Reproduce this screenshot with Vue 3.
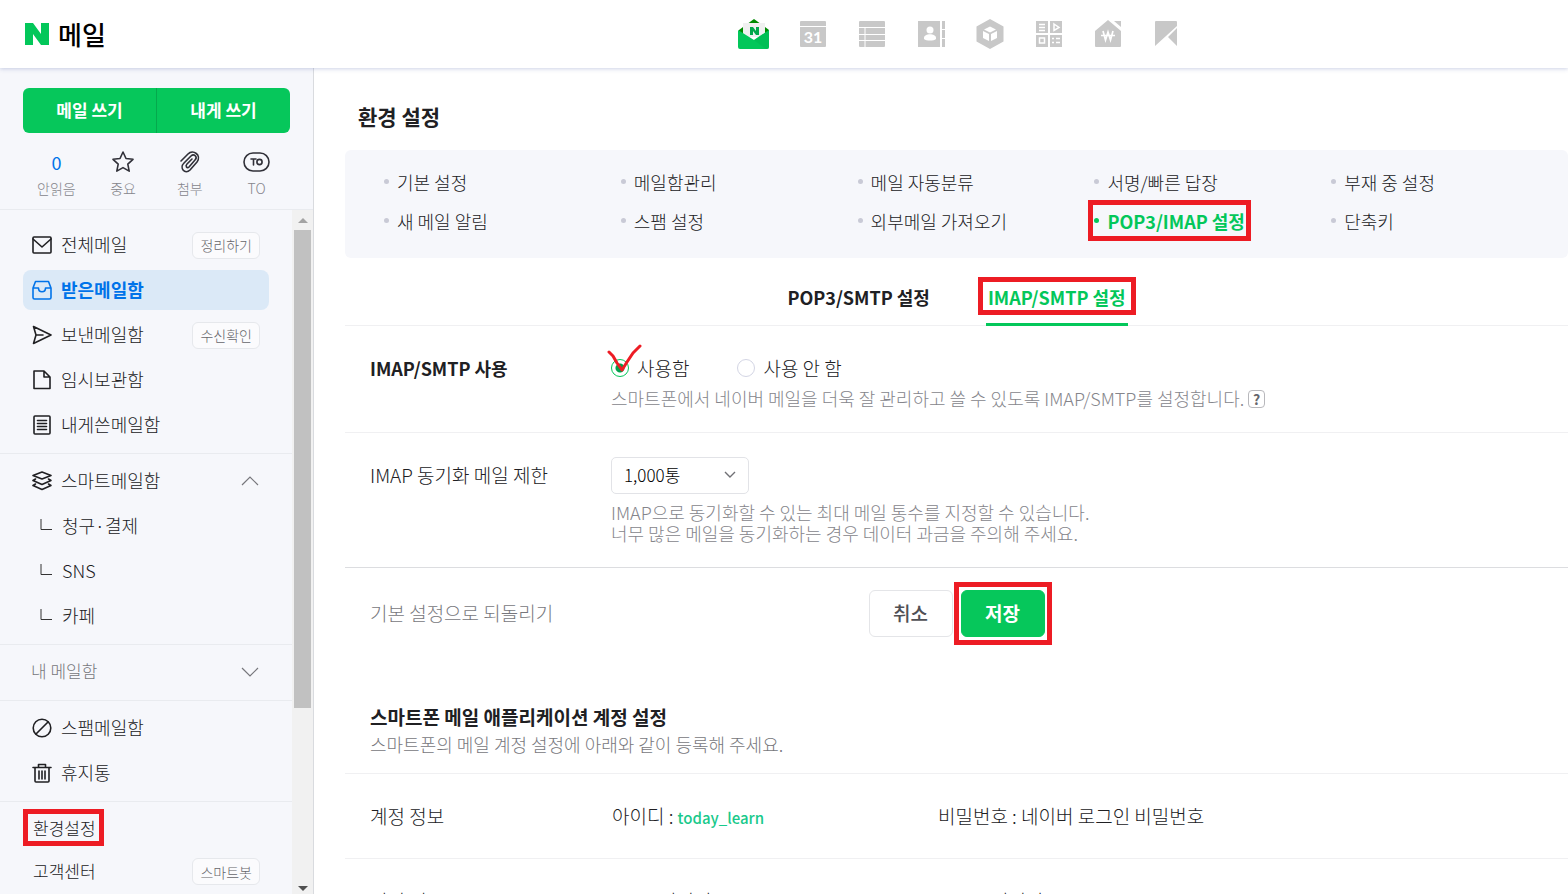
<template>
  <div class="app">
    <header class="top">
      <a href="#" class="logo">
        <svg width="24" height="22" viewBox="0 0 24 22"><path d="M0 0h8l8 11V0h8v22h-8L8 11v11H0z" fill="#03c75a" /></svg>
        <span>메일</span>
      </a>
      <nav class="services">
        <a v-for="s in services" :key="s.name" href="#" :aria-label="s.name">
          <svg width="32" height="32" viewBox="0 0 32 32" v-html="s.icon"></svg>
        </a>
      </nav>
    </header>

    <div class="body">
      <aside class="side">
        <div class="side-top">
          <div class="write">
            <button type="button">메일 쓰기</button>
            <button type="button">내게 쓰기</button>
          </div>
          <div class="quick">
            <a v-for="q in quick" :key="q.label" href="#">
              <span v-if="q.count" class="count">{{ q.count }}</span>
              <svg v-else width="28" height="24" viewBox="0 0 28 24" class="line" v-html="q.icon"></svg>
              <span>{{ q.label }}</span>
            </a>
          </div>
        </div>

        <div class="side-scroll">
          <div class="menus">
            <ul class="group boxes">
              <li v-for="b in boxes" :key="b.label" :class="{ on: b.on }">
                <a href="#">
                  <svg width="20" height="20" viewBox="0 0 20 20" class="line" v-html="b.icon"></svg>
                  {{ b.label }}
                </a>
                <button v-if="b.badge" type="button" class="badge">{{ b.badge }}</button>
              </li>
            </ul>
            <ul class="group smart">
              <li>
                <a href="#">
                  <svg width="20" height="20" viewBox="0 0 20 20" class="line" v-html="stackIcon"></svg>
                  스마트메일함
                </a>
                <button type="button" class="fold" aria-label="접기">
                  <svg width="18" height="10" viewBox="0 0 18 10"><path d="M1 9l8-8 8 8" /></svg>
                </button>
              </li>
              <li v-for="s in smart" :key="s" class="sub">
                <a href="#">
                  <svg width="12" height="12" viewBox="0 0 12 12"><path d="M1 0v10.500h11" fill="none" stroke="#333" /></svg>
                  {{ s }}
                </a>
              </li>
            </ul>
            <ul class="group mine">
              <li>
                <a href="#">내 메일함</a>
                <button type="button" class="fold" aria-label="펼치기">
                  <svg width="18" height="10" viewBox="0 0 18 10"><path d="M1 1l8 8 8-8" /></svg>
                </button>
              </li>
            </ul>
            <ul class="group trash">
              <li v-for="b in trash" :key="b.label">
                <a href="#">
                  <svg width="20" height="20" viewBox="0 0 20 20" class="line" v-html="b.icon"></svg>
                  {{ b.label }}
                </a>
              </li>
            </ul>
            <ul class="group etc">
              <li><a href="#" class="mark">환경설정</a></li>
              <li>
                <a href="#">고객센터</a>
                <button type="button" class="badge">스마트봇</button>
              </li>
            </ul>
          </div>
          <div class="bar">
            <svg width="10" height="5" viewBox="0 0 10 5"><path d="M0 5l5-5 5 5z" fill="#a3a3a3" /></svg>
            <div class="thumb"></div>
            <svg class="down" width="10" height="5" viewBox="0 0 10 5"><path d="M0 0l5 5 5-5z" fill="#505050" /></svg>
          </div>
        </div>
      </aside>

      <main class="content">
        <h1>환경 설정</h1>
        <ul class="settings">
          <li v-for="m in settings" :key="m" :class="{ on: m === 'POP3/IMAP 설정' }">
            <a href="#">{{ m }}</a>
          </li>
        </ul>

        <div class="tabs">
          <a href="#">POP3/SMTP 설정</a>
          <a href="#" class="on"><span class="mark">IMAP/SMTP 설정</span></a>
        </div>

        <form @submit.prevent>
          <div class="row">
            <strong class="label">IMAP/SMTP 사용</strong>
            <div class="value">
              <div class="radios">
                <label class="use">
                  <input v-model="use" type="radio" name="use" value="y" />사용함
                  <svg class="check" width="36" height="32" viewBox="0 0 36 32">
                    <path d="M2 8l4 4 4 7 5 7 5-8 6-9 7-7" />
                  </svg>
                </label>
                <label><input v-model="use" type="radio" name="use" value="n" />사용 안 함</label>
              </div>
              <p>
                스마트폰에서 네이버 메일을 더욱 잘 관리하고 쓸 수 있도록 IMAP/SMTP를 설정합니다.
                <button type="button" class="help">?</button>
              </p>
            </div>
          </div>
          <div class="row limit">
            <label class="label" for="limit">IMAP 동기화 메일 제한</label>
            <div class="value">
              <div class="select">
                <select id="limit" v-model="limit">
                  <option>1,000통</option>
                </select>
                <svg width="12" height="8" viewBox="0 0 12 8"><path d="M1 1l5 5 5-5" /></svg>
              </div>
              <p>IMAP으로 동기화할 수 있는 최대 메일 통수를 지정할 수 있습니다.<br />너무 많은 메일을 동기화하는 경우 데이터 과금을 주의해 주세요.</p>
            </div>
          </div>
          <div class="actions">
            <a href="#">기본 설정으로 되돌리기</a>
            <div class="buttons">
              <button type="button">취소</button>
              <button type="submit" class="save mark">저장</button>
            </div>
          </div>
        </form>

        <section>
          <div class="intro">
            <h2>스마트폰 메일 애플리케이션 계정 설정</h2>
            <p>스마트폰의 메일 계정 설정에 아래와 같이 등록해 주세요.</p>
          </div>
          <dl>
            <dt>계정 정보</dt>
            <dd>아이디 : <span class="user">today_learn</span></dd>
            <dd>비밀번호 : 네이버 로그인 비밀번호</dd>
          </dl>
          <dl>
            <dt>서버 명</dt>
            <dd>IMAP 서버명 : imap.naver.com</dd>
            <dd>SMTP 서버명 : smtp.naver.com</dd>
          </dl>
        </section>
      </main>
    </div>
  </div>
</template>

<script setup>
import { ref } from 'vue';

const use = ref('y');
const limit = ref('1,000통');

const services = [
  {
    name: '메일',
    icon: '<path d="M1 12L16 1l15 11v6H1z" fill="#008a00"/><path d="M5 5h22v14H5z" fill="#f0f0f0"/><path d="M0 12l16 10 15-10v17a2 2 0 0 1-2 2H2a2 2 0 0 1-2-2z" fill="#03c75a"/><path d="M16 22l12 9h1a2 2 0 0 0 2-2V12z" fill="#00b850" opacity=".5"/><path d="M12 9h3l3 4V9h3v8h-3l-3-4v4h-3z" fill="#00a84a"/>',
  },
  {
    name: '캘린더',
    icon: '<path d="M3 4a1 1 0 0 1 1-1h24a1 1 0 0 1 1 1v4H3zM3 9h26v19a1 1 0 0 1-1 1H4a1 1 0 0 1-1-1z" fill="#c8c8c8"/><text x="16" y="25" text-anchor="middle" font-size="16" font-weight="700" font-family="Lato, sans-serif" fill="#fff">31</text>',
  },
  {
    name: '메모',
    icon: '<rect x="3" y="3" width="26" height="26" rx="1" fill="#c8c8c8"/><path d="M3 9.500h26M3 16.500h26M3 22.500h26M9 10v19" stroke="#fff"/>',
  },
  {
    name: '주소록',
    icon: '<path d="M3 3h22v26H3zM27 3h3v8h-3zM27 12h3v8h-3zM27 21h3v8h-3z" fill="#c8c8c8"/><circle cx="15" cy="12" r="3.500" fill="#fff"/><path d="M9 20c0-5 12-5 12 0v1c-2 2-10 2-12 0z" fill="#fff"/>',
  },
  {
    name: 'MYBOX',
    icon: '<path d="M16 1l13.500 7.500v15L16 31 2.500 23.500v-15z" fill="#c8c8c8"/><path d="M16 8.500l6 3-6 3-6-3zM9 13l6 3v7l-6-3zM23 13l-6 3v7l6-3z" fill="#fff"/>',
  },
  {
    name: '오피스',
    icon: '<path d="M3 3h12v12H3zM17 3h12v12H17zM3 17h12v12H3zM17 17h12v12H17z" fill="#c8c8c8"/><path d="M6 6.500h6M6 9.500h6M6 12.500h6M19 20.500h2M23 20.500h4M19 24.500h2M23 24.500h4M21 6l5 3.500-5 3z M6.500 20h5v5h-5z" stroke="#fff" fill="none" stroke-width="1.500"/>',
  },
  {
    name: '가계부',
    icon: '<path d="M3 13L16 2l13 11v15a1 1 0 0 1-1 1H4a1 1 0 0 1-1-1zM22 3h7v6z" fill="#c8c8c8"/><path d="M11 13l2.500 9 2.500-8 2.500 8 2.500-9M9 17.500h14" fill="none" stroke="#fff" stroke-width="1.700"/>',
  },
  {
    name: '북마크',
    icon: '<path d="M4 4a1 1 0 0 1 1-1h20a1 1 0 0 1 1 1v4L4 28zM26 10v18l-9-9z" fill="#c8c8c8"/>',
  },
];

const quick = [
  { label: '안읽음', count: '0' },
  { label: '중요', icon: '<path d="M14 2l3 6.500 7 .8-5.200 4.800 1.400 7-6.200-3.500-6.200 3.500 1.400-7L4 9.300l7-.8z"/>' },
  { label: '첨부', icon: '<path d="M5 11l7-7c5-5 14 1 9 8l-7 8c-5 5-11-2-6-7l7-7c3-3 7 1 4 4l-6 7c-2 2-4-1-2-3l5-5"/>' },
  { label: 'TO', icon: '<rect x="1" y="3" width="25" height="18" rx="9"/><path d="M8 9h5M10.500 9v6"/><circle cx="16.500" cy="12" r="2.600"/>' },
];

const boxes = [
  { label: '전체메일', badge: '정리하기', icon: '<rect x="1" y="2" width="18" height="16" rx="1"/><path d="M1 4l9 8 9-8"/>' },
  { label: '받은메일함', on: true, icon: '<path d="M3.500 1.500h13L19 8v9.500a1.500 1.500 0 0 1-1.500 1.500h-15A1.500 1.500 0 0 1 1 17.500V8zM1 8h5.500c0 5 7 5 7 0H19"/>' },
  { label: '보낸메일함', badge: '수신확인', icon: '<path d="M1.500 1.500L19 10 1.500 18.500 4 10zM4 10h7"/>' },
  { label: '임시보관함', icon: '<path d="M2 1h10l6 6v11.500H2zM12 1v6h6"/>' },
  { label: '내게쓴메일함', icon: '<rect x="2" y="1" width="16" height="18" rx="1"/><path d="M5.500 5.500h9M5.500 8.500h9M5.500 11.500h9M5.500 14.500h9"/>' },
];
const stackIcon = '<path d="M10 1l9 3.500-9 3.500-9-3.500zM3.500 8L1 9.500l9 4 9-4L16.500 8M3.500 13L1 14.500l9 4 9-4-2.500-1.500"/>';
const smart = ['청구·결제', 'SNS', '카페'];
const trash = [
  { label: '스팸메일함', icon: '<circle cx="10" cy="10" r="8.800"/><path d="M4 16L16 4"/>' },
  { label: '휴지통', icon: '<path d="M1 4.500h18M6.500 4V1.500h7V4M3 5v13a1 1 0 0 0 1 1h12a1 1 0 0 0 1-1V5M7 8v8M10 8v8M13 8v8"/>' },
];

const settings = [
  '기본 설정', '메일함관리', '메일 자동분류', '서명/빠른 답장', '부재 중 설정',
  '새 메일 알림', '스팸 설정', '외부메일 가져오기', 'POP3/IMAP 설정', '단축키',
];
</script>

<style>
body {
  margin: 0;
}
</style>

<style scoped>
.app {
  height: 100vh;
  display: flex;
  flex-direction: column;
  overflow: hidden;
  background: #fff;
  color: #202023;
  font-family: "Noto Sans CJK KR", sans-serif;
  font-size: 18px;
  font-weight: 300;
  line-height: 24px;
}
.app * {
  box-sizing: border-box;
}
a {
  color: inherit;
  text-decoration: none;
}
ul, dl, dd, p, h1, h2 {
  margin: 0;
  padding: 0;
  list-style: none;
}
button, select, input {
  font: inherit;
  color: inherit;
  margin: 0;
  padding: 0;
  cursor: pointer;
}
svg {
  flex: none;
}
.line {
  fill: none;
  stroke: currentColor;
  stroke-width: 1.6;
  stroke-linejoin: round;
  stroke-linecap: round;
}

/* red marker frames */
.mark {
  position: relative;
}
.mark::after {
  content: "";
  position: absolute;
  inset: -7px -10px -5px;
  border: 5px solid #ed1c24;
  pointer-events: none;
}

.top {
  flex: none;
  position: relative;
  z-index: 1;
  height: 68px;
  display: flex;
  align-items: center;
  background: #fff;
  box-shadow: 0 1px 4px rgba(60, 80, 160, 0.25);
}
.logo {
  flex: 1;
  display: flex;
  align-items: center;
  gap: 9px;
  padding-left: 25px;
  color: #000;
  font-size: 26px;
  font-weight: 500;
}
.services {
  flex: none;
  display: flex;
  gap: 27px;
  padding-right: 385px;
}
.services svg {
  display: block;
}

.body {
  flex: 1;
  min-height: 0;
  display: flex;
}
.side {
  flex: none;
  width: 314px;
  display: flex;
  flex-direction: column;
  background: #f6f7fb;
  border-right: 1px solid #d9dbdf;
}
.side-top {
  flex: none;
  height: 142px;
  padding: 20px 23px 0;
  border-bottom: 1px solid #e9ebef;
}
.write {
  display: flex;
  height: 45px;
  border-radius: 6px;
  overflow: hidden;
}
.write button {
  flex: 1;
  padding-bottom: 2px;
  border: 0;
  background: #06c75b;
  color: #fff;
  font-size: 17px;
  font-weight: 700;
}
.write button + button {
  border-left: 1px solid #05a94d;
}
.quick {
  display: flex;
  padding-top: 17px;
}
.quick a {
  flex: 1;
  display: flex;
  flex-direction: column;
  align-items: center;
  gap: 2px;
  color: #303038;
}
.quick span {
  font-size: 14px;
  color: #85858b;
}
.quick .count {
  font-size: 18px;
  font-weight: 400;
  color: #0073e9;
}

.side-scroll {
  flex: 1;
  min-height: 0;
  display: flex;
}
.menus {
  flex: 1;
  overflow: hidden;
}
.group {
  padding: 7px 23px 8px;
  border-bottom: 1px solid #e9ebef;
}
.group li {
  display: flex;
  align-items: center;
  height: 40px;
  margin-bottom: 5px;
  padding: 0 9px;
  border-radius: 8px;
}
.group li:last-child {
  margin-bottom: 0;
}
.group a {
  display: flex;
  align-items: center;
  gap: 9px;
  padding-bottom: 2px;
}
.group a svg {
  margin-top: 2px;
}
.boxes {
  padding-top: 15px;
}
.boxes li.on {
  background: #dbe9f7;
  color: #0073e9;
  font-weight: 700;
}
.group .sub a {
  gap: 10px;
  padding-left: 8px;
}
.group .sub svg {
  margin-top: 0;
}
.mine {
  color: #77777c;
  font-size: 17px;
}
.mine li {
  padding-left: 8px;
}
.etc {
  padding: 5px 23px;
  border: 0;
  font-size: 17px;
}
.etc li {
  margin: 0;
  height: 43px;
  padding-left: 10px;
}
.etc .mark::after {
  inset: -7px -8px -4px -10px;
}
.badge {
  margin-left: auto;
  height: 27px;
  padding: 0 7px;
  border: 1px solid #e6e8ec;
  border-radius: 6px;
  background: #fbfbfd;
  color: #66666b;
  font-size: 14px;
  line-height: 20px;
}
.fold {
  margin-left: auto;
  width: 20px;
  border: 0;
  background: none;
  display: flex;
  justify-content: center;
}
.fold path {
  fill: none;
  stroke: #77777c;
  stroke-width: 1.2;
}
.bar {
  flex: none;
  width: 21px;
  padding: 8px 2px 3px;
  display: flex;
  flex-direction: column;
  align-items: center;
  gap: 7px;
  background: #f1f1f1;
}
.thumb {
  width: 17px;
  height: 71%;
  background: #c1c1c1;
}
.down {
  margin-top: auto;
}

.content {
  flex: 1;
  min-width: 0;
  padding-left: 31px;
}
h1 {
  padding: 33px 13px 19px;
  font-size: 21px;
  font-weight: 700;
  line-height: 30px;
}
.settings {
  display: grid;
  grid-template-columns: repeat(5, 1fr);
  padding: 12px 0 18px 39px;
  border-radius: 6px;
  background: #f6f7fb;
}
.settings li {
  display: flex;
  align-items: center;
  gap: 8px;
  height: 39px;
}
.settings li::before {
  content: "";
  width: 5px;
  height: 5px;
  border-radius: 50%;
  background: #c9cad6;
}
.settings .on {
  position: relative;
  justify-self: start;
  color: #03c75a;
  font-weight: 700;
}
.settings .on::before {
  background: #03c75a;
}
.settings .on::after {
  content: "";
  position: absolute;
  inset: -1px -6px;
  border: 5px solid #ed1c24;
}

.tabs {
  display: flex;
  justify-content: center;
  gap: 54px;
  height: 68px;
  border-bottom: 1px solid #f0f0f2;
  font-weight: 700;
}
.tabs a {
  height: 68px;
  padding: 27px 2px 0;
  border-bottom: 3px solid transparent;
}
.tabs .on {
  color: #03c75a;
  border-color: #03c75a;
}

.row {
  display: flex;
  min-height: 107px;
  padding: 30px 0 0 25px;
  border-bottom: 1px solid #f0f0f2;
}
.label {
  flex: none;
  width: 241px;
  font-size: 19px;
}
strong.label {
  font-size: 18px;
  font-weight: 700;
}
.row p {
  padding-top: 8px;
  color: #85858b;
  line-height: 21px;
}
.radios {
  display: flex;
  gap: 48px;
}
.radios label {
  display: flex;
  align-items: center;
  gap: 8px;
  font-size: 19px;
}
.radios input {
  appearance: none;
  width: 18px;
  height: 18px;
  border: 1px solid #d3d5e4;
  border-radius: 50%;
}
.radios input:checked {
  border-color: #03c75a;
  background: radial-gradient(circle, #03a04a 4px, #fff 5px);
}
.use {
  position: relative;
}
.check {
  position: absolute;
  left: -4px;
  top: -12px;
}
.check path {
  fill: none;
  stroke: #ed1c24;
  stroke-width: 3;
  stroke-linecap: round;
  stroke-linejoin: round;
}
.help {
  width: 17px;
  height: 18px;
  border: 1px solid #b8b8bc;
  border-radius: 4px;
  background: #fff;
  color: #66666b;
  font-size: 14px;
  font-weight: 700;
  line-height: 14px;
  vertical-align: 1px;
}
.limit {
  min-height: 135px;
  border-color: #dcdde0;
}
.limit .value {
  margin-top: -6px;
}
.select {
  position: relative;
  width: 138px;
}
.select select {
  appearance: none;
  width: 100%;
  height: 37px;
  padding: 0 0 1px 12px;
  border: 1px solid #e2e3e7;
  border-radius: 5px;
  background: #fff;
  color: #000;
  font-size: 17px;
}
.select svg {
  position: absolute;
  right: 13px;
  top: 14px;
  fill: none;
  stroke: #707075;
  stroke-width: 1.4;
  pointer-events: none;
}

.actions {
  display: grid;
  grid-template-columns: 1fr auto 1fr;
  align-items: center;
  padding-top: 22px;
  color: #77777c;
  font-size: 19px;
}
.actions a {
  padding: 0 0 2px 25px;
}
.buttons {
  display: flex;
  gap: 8px;
}
.buttons button {
  width: 84px;
  height: 47px;
  padding-bottom: 2px;
  border: 1px solid #e4e5e8;
  border-radius: 6px;
  background: #fff;
  color: #505055;
  font-weight: 500;
}
.buttons .save {
  border-color: #06c75b;
  background: #06c75b;
  color: #fff;
  font-weight: 700;
}
.buttons .save::after {
  inset: -9px -8px;
}

section {
  padding-top: 66px;
  font-size: 19px;
}
.intro {
  padding: 0 25px 15px;
  border-bottom: 1px solid #f0f0f2;
}
h2 {
  font-size: 19px;
  font-weight: 700;
  line-height: 28px;
}
.intro p {
  color: #77777c;
  font-size: 18px;
  line-height: 27px;
}
dl {
  display: flex;
  height: 85px;
  padding: 30px 0 0 25px;
  border-bottom: 1px solid #f0f0f2;
}
dt {
  width: 242px;
}
dd {
  width: 326px;
}
.user {
  color: #19c98b;
  font-size: 15px;
  font-weight: 500;
}
</style>
